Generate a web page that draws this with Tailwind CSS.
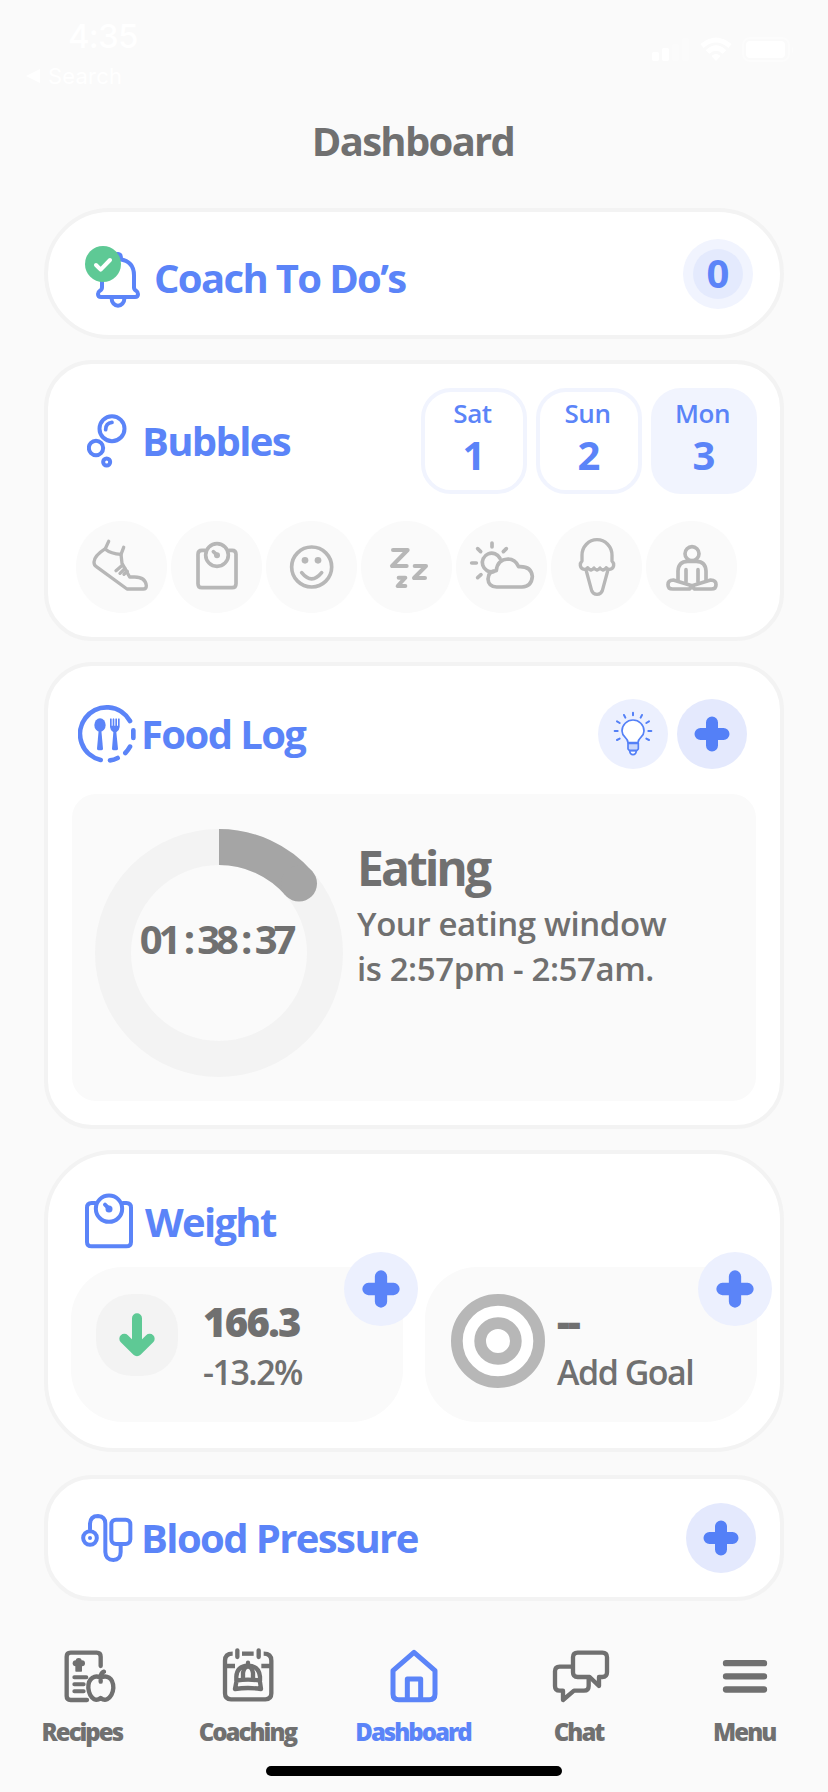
<!doctype html>
<html lang="en">
  <head>
    <meta charset="UTF-8" />
    <title>Dashboard</title>
    <script src="https://cdn.jsdelivr.net/npm/@tailwindcss/browser@4"></script>
  </head>

  <body class="w-[828px] h-[1792px] overflow-hidden bg-[#fafafa] font-['Open_Sans',sans-serif] text-[#707070] flex flex-col">
    <!-- STATUS BAR -->
    <header class="h-[104px] shrink-0 flex justify-between text-white font-['Inter',sans-serif]">
      <div class="pt-[16px] pl-[26px]">
        <div class="pl-[42px] text-[33px] leading-[40px] font-medium tracking-[-0.8px]">4:35</div>
        <div class="flex items-center gap-[8px] pt-[6px] text-[22px] leading-[28px] tracking-[0.2px]">
          <svg class="w-[14px] h-[14px]" viewBox="0 0 14 14" fill="currentColor"><path d="M0 7 14 0V14Z" /></svg>
          Search
        </div>
      </div>
      <div class="flex items-start gap-[10px] pt-[37px] pr-[33px]">
        <svg class="w-[38px] h-[25px]" viewBox="0 0 38 25" fill="currentColor">
          <rect x="0" y="15" width="7" height="9" rx="2" />
          <rect x="10" y="11" width="7" height="13" rx="2" />
          <rect x="20" y="7" width="7" height="17" rx="2" opacity=".3" />
          <rect x="30" y="1" width="7" height="23" rx="2" opacity=".3" />
        </svg>
        <svg class="w-[32px] h-[25px]" viewBox="0 0 32 25" fill="none" stroke="currentColor" stroke-width="5">
          <path d="M2 9Q16 -3 30 9M7.500 15Q16 7 24.500 15" />
          <path d="M16 24 11.500 19Q16 15 20.500 19Z" fill="currentColor" stroke="none" />
        </svg>
        <svg class="w-[53px] h-[25px]" viewBox="0 0 53 25" fill="currentColor">
          <rect x="1" y="1" width="46" height="23" rx="7" fill="none" stroke="currentColor" stroke-width="2" opacity=".4" />
          <rect x="4" y="4" width="39" height="17" rx="4" />
          <path d="M50 9q3 4 0 8z" opacity=".4" />
        </svg>
      </div>
    </header>

    <h1 class="h-[104px] shrink-0 pt-[9px] pr-[2px] text-center text-[40px] leading-[56px] font-bold tracking-[-1.7px]">Dashboard</h1>

    <main class="pl-[44px] pr-[44px] flex flex-col gap-[21px]">
      <!-- COACH TO DO'S -->
      <section class="h-[131px] bg-white border-4 border-[#f3f3f3] rounded-[66px] flex items-center justify-between pl-[36px] pr-[27px] text-[#5b84f8]">
        <div class="flex items-center pt-[7px]">
          <svg class="w-[57px] h-[64px]" viewBox="132 135 171 192" fill="none" stroke="currentColor" stroke-width="12" stroke-linecap="round" stroke-linejoin="round">
            <path d="M186 240V262Q186 269 180 272Q174 276 174 282Q174 291 183 291H285Q294 291 294 282Q294 276 288 272Q282 269 282 262V226C282 198 266 182 240 178" />
            <path d="M232 162Q243 160 243 176" />
            <path d="M215 296a19 21 0 0 0 38 0" />
            <circle cx="189" cy="192" r="54" fill="#5ec995" stroke="none" />
            <path d="M168 195 182 209 210 180" stroke="#fff" />
          </svg>
          <h2 class="pl-[13px] pt-[2px] text-[40px] leading-[48px] font-bold tracking-[-1.65px]">Coach To Do’s</h2>
        </div>
        <div class="size-[70px] rounded-full bg-[#f1f4fe] flex items-center justify-center">
          <div class="size-[50px] rounded-full bg-[#e4eafd] flex items-center justify-center text-[40px] leading-[48px] pb-[2px] font-bold">0</div>
        </div>
      </section>

      <!-- BUBBLES -->
      <section class="h-[281px] bg-white border-4 border-[#f3f3f3] rounded-[48px] pt-[24px] pl-[28px] pr-[23px]">
        <div class="flex items-center justify-between text-[#5b84f8]">
          <div class="flex items-center pl-[11px]">
            <svg class="w-[40px] h-[54px]" viewBox="142 162 120 162" fill="none" stroke="currentColor" stroke-width="12" stroke-linecap="round">
              <circle cx="217" cy="206" r="37.500" />
              <circle cx="169" cy="264" r="21.500" />
              <circle cx="201" cy="306" r="10.500" />
              <path d="M198 209Q198 189 217 187" stroke-width="11" />
            </svg>
            <h2 class="pl-[15px] text-[40px] leading-[48px] font-bold tracking-[-1.65px]">Bubbles</h2>
          </div>
          <div class="flex gap-[9px] text-center">
            <div class="size-[106px] rounded-[30px] border-4 border-[#f1f4fe] pt-[3px]">
              <div class="text-[26px] leading-[36px] font-semibold tracking-[-0.4px] pr-[3px]">Sat</div>
              <div class="text-[40px] leading-[48px] font-bold">1</div>
            </div>
            <div class="size-[106px] rounded-[30px] border-4 border-[#f1f4fe] pt-[3px]">
              <div class="text-[26px] leading-[36px] font-semibold tracking-[-0.4px] pr-[3px]">Sun</div>
              <div class="text-[40px] leading-[48px] font-bold">2</div>
            </div>
            <div class="size-[106px] rounded-[30px] border-4 border-[#f1f4fe] bg-[#f1f4fe] pt-[3px]">
              <div class="text-[26px] leading-[36px] font-semibold tracking-[-0.4px] pr-[3px]">Mon</div>
              <div class="text-[40px] leading-[48px] font-bold">3</div>
            </div>
          </div>
        </div>

        <div class="flex gap-[4px] pt-[27px] text-[#b7b7b7]">
          <div class="w-[91px] h-[92px] rounded-full bg-[#fafafa]">
            <svg class="size-full" viewBox="108 483 273 276" fill="none" stroke="currentColor" stroke-width="10" stroke-linecap="round" stroke-linejoin="round">
              <path d="M206 544 196 566Q162 588 162 606Q162 616 169 620L261 687H310Q319 687 319 677Q316 651 284 651H269L246 610 243 583 251 562" />
              <path d="M195 567Q213 582 243 583M228 632 247 616M240 640 255 625M252 643 262 634" />
            </svg>
          </div>
          <div class="w-[91px] h-[92px] rounded-full bg-[#fafafa]">
            <svg class="size-full" viewBox="393 483 273 276" fill="none" stroke="currentColor" stroke-width="11" stroke-linecap="round">
              <path d="M494 571H486Q474 571 474 583V671Q474 683 486 683H576Q588 683 588 671V583Q588 571 576 571H568M520 575 529 583" />
              <circle cx="531" cy="585" r="34" />
              <circle cx="531" cy="586" r="9" fill="currentColor" stroke="none" />
            </svg>
          </div>
          <div class="w-[91px] h-[92px] rounded-full bg-[#fafafa]">
            <svg class="size-full" viewBox="679 483 273 276" fill="none" stroke="currentColor" stroke-width="11" stroke-linecap="round">
              <circle cx="816" cy="621" r="60" />
              <path d="M786 638Q816 675 846 638" />
              <g fill="currentColor" stroke="none">
                <circle cx="796" cy="601" r="10" />
                <circle cx="835" cy="601" r="10" />
              </g>
            </svg>
          </div>
          <div class="w-[91px] h-[92px] rounded-full bg-[#fafafa]">
            <svg class="size-full" viewBox="963 483 273 276" fill="none" stroke="currentColor" stroke-width="12" stroke-linecap="round" stroke-linejoin="round">
              <path d="M1059 570H1103L1056 618H1100M1124 618H1158L1122 654H1155M1076 653H1096L1073 678H1096" />
            </svg>
          </div>
          <div class="w-[91px] h-[92px] rounded-full bg-[#fafafa]">
            <svg class="size-full" viewBox="108 63 273 276" fill="none" stroke="currentColor" stroke-width="11" stroke-linecap="round" stroke-linejoin="round">
              <path d="M216 129V141M173 146 182 155M259 146 250 155M155 189H169M183 224 173 233" />
              <path d="M240 175A28 28 0 1 0 221 215" />
              <path d="M229 212Q232 179 264 177Q286 177 296 200Q334 198 337 229Q335 259 306 261H230Q205 260 204 237Q205 212 229 212Z" />
            </svg>
          </div>
          <div class="w-[91px] h-[92px] rounded-full bg-[#fafafa]">
            <svg class="size-full" viewBox="393 63 273 276" fill="none" stroke="currentColor" stroke-width="10" stroke-linecap="round" stroke-linejoin="round">
              <path d="M486 183V166A45 47 0 0 1 576 166V183Q582 189 581 197Q579 207 569 208Q563 208 559 203Q555 209 549 210Q543 209 540 204Q536 209 531 210Q525 209 522 204Q518 209 513 210Q507 209 503 203Q499 208 493 208Q483 207 481 197Q480 189 486 183" />
              <path d="M499 213 515 272Q519 283 531 283Q543 283 547 272L563 213" />
            </svg>
          </div>
          <div class="w-[91px] h-[92px] rounded-full bg-[#fafafa]">
            <svg class="size-full" viewBox="678 63 273 276" fill="none" stroke="currentColor" stroke-width="11" stroke-linecap="round" stroke-linejoin="round">
              <circle cx="816" cy="161" r="21" />
              <path d="M774 240V213Q775 185 803 184H829Q857 185 858 213V240M798 209V245M834 209V245" />
              <path d="M816 257 760 240Q744 240 744 254Q744 267 758 267H808L816 260 824 267H874Q888 267 888 254Q888 240 872 240Z" />
            </svg>
          </div>
        </div>
      </section>

      <!-- FOOD LOG -->
      <section class="h-[467px] bg-white border-4 border-[#f3f3f3] rounded-[48px] pt-[33px] px-[24px]">
        <div class="flex items-center justify-between pl-[6px] pr-[9px] text-[#5b84f8]">
          <div class="flex items-center">
            <svg class="w-[58px] h-[58px]" viewBox="114 164 174 174" fill="none" stroke="currentColor" stroke-width="14" stroke-linecap="round">
              <path d="M182 329A80 80 0 1 1 270 212M280 240V263M270 289Q264 300 256 308M233 323Q222 329 210 330" />
              <g fill="currentColor" stroke="none">
                <ellipse cx="180" cy="224" rx="17" ry="20" />
                <path d="M176 240h8l5 55q0 5-9 5t-9-5z" />
                <path d="M210 206q3-4 5 0v20h3v-20q2-4 5 0v20h3v-20q2-4 5 0v20h3v-20q3-4 5 0v24q-1 11-10 16l5 49q0 5-9 5t-9-5l4-49q-9-5-10-16z" />
              </g>
            </svg>
            <h2 class="pl-[5px] text-[40px] leading-[48px] font-bold tracking-[-1.6px]">Food Log</h2>
          </div>
          <div class="flex gap-[9px]">
            <button class="size-[70px] rounded-full bg-[#ecf0fe]">
              <svg class="size-full" viewBox="534 147 210 210" fill="none" stroke="#5480f7" stroke-width="5" stroke-linecap="round" stroke-linejoin="round">
                <path d="M624 278C624 262 606 262 606 243A33 33 0 0 1 672 243C672 262 654 262 654 278Z" fill="#fff" />
                <path d="M629 302Q630 314 639 314Q648 314 649 302Z" fill="#fff" />
                <path d="M624 280H655V297L651 301H628L624 297Z" fill="#c9d6fb" />
                <path d="M639 188V196M612 195 616 203M666 195 662 203M591 214 599 219M687 214 679 219M584 243H593M685 243H694M591 270 599 266M687 270 679 266" stroke-width="6" />
              </svg>
            </button>
            <button class="size-[70px] rounded-full bg-[#e4e9fd]">
              <svg class="size-full" viewBox="0 0 70 70" stroke="#5480f7" stroke-width="12" stroke-linecap="round"><path d="M35 23.500V46.500M23.500 35H46.500" /></svg>
            </button>
          </div>
        </div>

        <div class="mt-[25px] h-[307px] rounded-[24px] bg-[#fafafa] flex pl-[23px] pt-[35px]">
          <div class="grid size-[248px]">
            <svg class="size-[248px] col-start-1 row-start-1" viewBox="0 0 248 248" fill="none" stroke-width="36">
              <circle cx="124" cy="124" r="106" stroke="#f3f3f3" />
              <path d="M124 18A106 106 0 0 1 204 54.500" stroke="#a5a5a5" />
              <circle cx="204" cy="54.500" r="18" fill="#a5a5a5" stroke="none" />
            </svg>
            <div class="col-start-1 row-start-1 pt-[86px] pr-[6px] text-center text-[40px] leading-[48px] font-bold tracking-[-4.1px] whitespace-nowrap">01 : 38 : 37</div>
          </div>
          <div class="pl-[14px] pt-[11px]">
            <h3 class="text-[48px] leading-[56px] font-bold tracking-[-3px]">Eating</h3>
            <p class="text-[33px] leading-[45px] pt-[5px] font-semibold tracking-[-0.4px]">Your eating window<br />is 2:57pm - 2:57am.</p>
          </div>
        </div>
      </section>

      <!-- WEIGHT -->
      <section class="h-[302px] bg-white border-4 border-[#f3f3f3] rounded-[70px] pt-[39px] pl-[23px] pr-[23px]">
        <div class="flex items-center pl-[14px] text-[#5b84f8]">
          <svg class="w-[48px] h-[56px]" viewBox="135 128 144 168" fill="none" stroke="currentColor" stroke-width="12" stroke-linecap="round">
            <path d="M165 158H155Q141 158 141 172V275Q141 288 155 288H259Q273 288 273 275V172Q273 158 259 158H249M195 163 204 172" />
            <circle cx="207" cy="175" r="39.500" />
            <circle cx="207" cy="176" r="10.500" fill="currentColor" stroke="none" />
          </svg>
          <h2 class="pl-[12px] pt-[2px] text-[40px] leading-[48px] font-bold tracking-[-1.7px]">Weight</h2>
        </div>

        <div class="flex gap-[22px] pt-[18px]">
          <div class="relative w-[332px] h-[155px] rounded-[52px] bg-[#fafafa] flex pl-[25px] pt-[27px]">
            <div class="size-[82px] rounded-[36px] bg-[#f3f3f3]">
              <svg class="size-full" viewBox="168 432 246 246" fill="none" stroke="#5ec995" stroke-width="30" stroke-linecap="round" stroke-linejoin="round"><path d="M291 505V603M253 566 291 604 329 566" /></svg>
            </div>
            <div class="pl-[25px] pt-[4px]">
              <div class="text-[40px] leading-[48px] font-extrabold tracking-[-1.7px]">166.3</div>
              <div class="text-[34px] leading-[46px] pt-[3px] font-semibold tracking-[-1.5px]">-13.2%</div>
            </div>
            <button class="absolute -right-[15px] -top-[15px] size-[74px] rounded-full bg-[#ecf0fe]">
              <svg class="size-full" viewBox="0 0 74 74" stroke="#5b84f8" stroke-width="12.300" stroke-linecap="round"><path d="M37 24.500V49.500M24.500 37H49.500" /></svg>
            </button>
          </div>
          <div class="relative w-[332px] h-[155px] rounded-[52px] bg-[#fafafa] flex pl-[26px] pt-[27px]">
            <svg class="size-[94px]" viewBox="0 0 94 94" fill="#fff" stroke="#b7b7b7" stroke-width="11.700">
              <circle cx="47" cy="47" r="41.150" />
              <circle cx="47" cy="47" r="17.850" />
            </svg>
            <div class="pl-[12px] pt-[4px]">
              <div class="text-[40px] leading-[48px] font-extrabold tracking-[-1.7px]">--</div>
              <div class="text-[34px] leading-[46px] pt-[3px] font-semibold tracking-[-1.5px]">Add Goal</div>
            </div>
            <button class="absolute -right-[15px] -top-[15px] size-[74px] rounded-full bg-[#ecf0fe]">
              <svg class="size-full" viewBox="0 0 74 74" stroke="#5b84f8" stroke-width="12.300" stroke-linecap="round"><path d="M37 24.500V49.500M24.500 37H49.500" /></svg>
            </button>
          </div>
        </div>
      </section>

      <!-- BLOOD PRESSURE -->
      <section class="mt-[2px] h-[126px] bg-white border-4 border-[#f3f3f3] rounded-[48px] flex items-center justify-between pl-[33px] pr-[24px] text-[#5b84f8]">
        <div class="flex items-center">
          <svg class="w-[52px] h-[48px]" viewBox="244 162 156 144" fill="none" stroke="currentColor" stroke-width="12" stroke-linecap="round">
            <circle cx="271" cy="234" r="20.500" />
            <circle cx="271" cy="234" r="6" fill="currentColor" stroke="none" />
            <path d="M271 208V191Q272 168 295 168Q317 169 317 191V276Q318 300 341 300Q363 299 363 276V258" />
            <rect x="335" y="179" width="57" height="73" rx="14" />
          </svg>
          <h2 class="pl-[8px] text-[40px] leading-[48px] font-bold tracking-[-1.6px]">Blood Pressure</h2>
        </div>
        <button class="size-[70px] rounded-full bg-[#e4e9fd]">
          <svg class="size-full" viewBox="0 0 70 70" stroke="#5480f7" stroke-width="12" stroke-linecap="round"><path d="M35 23.500V46.500M23.500 35H46.500" /></svg>
        </button>
      </section>
    </main>

    <!-- TAB BAR -->
    <nav class="pt-[46px] grid grid-cols-5 text-center text-[24px] leading-[32px] font-extrabold tracking-[-2px]">
      <a class="flex flex-col items-center gap-[11px]">
        <svg class="w-[58px] h-[58px] ml-[14px]" viewBox="181 563 174 174" fill="none" stroke="currentColor" stroke-width="13" stroke-linecap="round" stroke-linejoin="round">
          <path d="M300 620V592Q300 580 288 580H210Q198 580 198 592V710Q198 722 210 722H259" />
          <path d="M221 654H257M221 675H249M221 696H249" stroke-width="12" />
          <path d="M300 655Q286 648 276 655Q262 664 263 686Q265 710 281 720Q290 724 300 716Q310 724 319 720Q336 710 338 686Q338 663 325 655Q314 648 300 655ZM300 667V652Q301 640 310 637" />
          <g fill="currentColor" stroke="none">
            <circle cx="225" cy="612" r="9" />
            <circle cx="244" cy="612" r="9" />
            <circle cx="234" cy="605" r="9" />
            <rect x="224" y="610" width="20" height="27" rx="2" />
          </g>
        </svg>
        <span class="pr-[2px]">Recipes</span>
      </a>
      <a class="flex flex-col items-center gap-[11px]">
        <svg class="w-[58px] h-[58px]" viewBox="660 563 174 174" fill="none" stroke="currentColor" stroke-width="13" stroke-linecap="round" stroke-linejoin="round">
          <path d="M701 583Q678 583 678 604V702Q678 720 696 720H799Q817 720 817 702V604Q817 583 794 583M684 620H708M787 620H811" stroke-linecap="butt" />
          <path d="M729 583H764" stroke-linecap="butt" />
          <path d="M715 573V593M779 573V593" />
          <path d="M712 664V652Q714 620 747 619Q780 620 783 652V664Q747 658 712 664ZM712 668 708 689Q747 683 786 689L783 668" />
          <path d="M732 656V640Q736 622 747 622Q758 622 762 640V656M747 610V620" />
        </svg>
        <span class="pr-[2px]">Coaching</span>
      </a>
      <a class="flex flex-col items-center gap-[11px] text-[#5b84f8]">
        <svg class="w-[58px] h-[58px]" viewBox="1155 563 174 174" fill="none" stroke="currentColor" stroke-width="15" stroke-linejoin="round">
          <path d="M1179 634 1242 579 1305 634V704Q1305 721 1288 721H1196Q1179 721 1179 704ZM1222 721V659H1262V721" />
        </svg>
        <span class="pr-[2px]">Dashboard</span>
      </a>
      <a class="flex flex-col items-center gap-[11px]">
        <svg class="w-[58px] h-[58px] ml-[2px]" viewBox="411 563 174 174" fill="none" stroke="currentColor" stroke-width="13" stroke-linecap="round" stroke-linejoin="round">
          <path d="M488 580H562Q576 580 576 594V639Q576 653 562 653H552V680L524 653H488Q474 653 474 639V594Q474 580 488 580Z" />
          <path d="M470 622H434Q420 622 420 636V680Q420 694 434 694H444V722L477 694H507Q521 694 521 680V660" />
        </svg>
        <span class="pr-[2px]">Chat</span>
      </a>
      <a class="flex flex-col items-center gap-[11px]">
        <svg class="w-[58px] h-[58px]" viewBox="906 563 174 174" stroke="currentColor" stroke-width="19" stroke-linecap="round"><path d="M936 611.500H1050M936 651H1050M936 690.500H1050" /></svg>
        <span class="pr-[2px]">Menu</span>
      </a>
    </nav>
    <div class="mt-[18px] mx-auto w-[296px] h-[10px] shrink-0 rounded-full bg-black"></div>
  </body>
</html>
